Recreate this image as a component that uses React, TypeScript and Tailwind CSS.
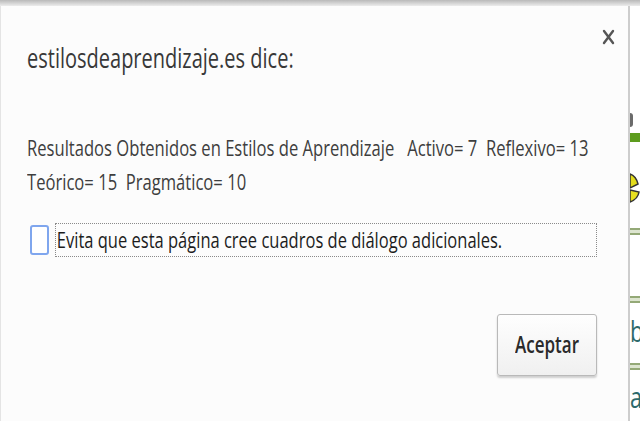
const font = { fontFamily: '"Open Sans", "Noto Sans", sans-serif' };

const Stretch = ({ children }: { children: React.ReactNode }) => (
  <span className="inline-block scale-y-[1.35] whitespace-pre">{children}</span>
);

const App = () => {
  return (
    <div className="w-[640px] h-[421px] overflow-hidden bg-white" style={font}>
      <div className="h-[6px] bg-linear-to-b from-[#b9b9b9] to-[#ececec]" />
      <div className="flex h-[415px]">
        {/* dialog */}
        <div className="w-[630px] flex flex-col bg-[#fcfcfc] border-l border-[#e4e4e4] border-r-2 border-r-[#cdcdcd] pl-[26px] pr-[31px]">
          <div className="flex items-start justify-between">
            <div className="mt-[39px] text-[20px] leading-[28px] text-[#383838]">
              <Stretch>estilosdeaprendizaje.es dice:</Stretch>
            </div>
            <button className="mt-[23px] mr-[-18px] text-[#555]">
              <svg width="13" height="16" viewBox="0 0 13 16">
                <path d="M2 2 L11 14 M11 2 L2 14" stroke="currentColor" strokeWidth="2.4" strokeLinecap="round" />
              </svg>
            </button>
          </div>

          <div className="mt-[58px] text-[16.6px] leading-[34px] text-[#3e3e3e]">
            <div>
              <Stretch>Resultados Obtenidos en Estilos de Aprendizaje   Activo= 7  Reflexivo= 13</Stretch>
            </div>
            <div>
              <Stretch>Teórico= 15  Pragmático= 10</Stretch>
            </div>
          </div>

          <div className="mt-[24px] flex items-center h-[34px]">
            <div className="ml-[3px] w-[19px] h-[30px] rounded-[3px] border-2 border-[#7fa6ee] bg-white" />
            <div className="ml-[6px] w-[547px] h-[34px] border border-dotted border-[#8a8a8a] pl-[1px] text-[16.5px] leading-[32px] text-[#1c1c1c]">
              <Stretch>Evita que esta página cree cuadros de diálogo adicionales.</Stretch>
            </div>
          </div>

          <div className="mt-[57px] flex justify-end">
            <button className="w-[100px] h-[62px] rounded-[3px] border border-[#b9b9b9] bg-linear-to-b from-[#fefefe] to-[#f0f0f0] shadow-[0_2px_2px_rgba(0,0,0,0.18)] text-[17px] font-semibold leading-[30px] text-[#2a2a2a]">
              <Stretch>Aceptar</Stretch>
            </button>
          </div>
        </div>

        {/* page behind the dialog */}
        <div className="flex-1 flex flex-col overflow-hidden">
          <div className="mt-[107px] w-[3px] h-[14px] rounded-r-full bg-[#6b6b6b]" />
          <div className="mt-[6px] h-[9px] bg-[#5d9c1e]" />
          <svg className="mt-[30px]" width="10" height="31" viewBox="0 0 10 31">
            <path d="M0 2 Q6 4 8 12 L0 16 Z" fill="#e3dc1c" stroke="#333" strokeWidth="1.5" />
            <path d="M0 18 L9 20 Q8 27 0 30 Z" fill="#e8e020" stroke="#333" strokeWidth="1.5" />
          </svg>
          <div className="mt-[25px] h-[7px] border-y-2 border-[#94a977] bg-[#dde5d0]" />
          <div className="mt-[61px] h-[7px] border-y-2 border-[#94a977] bg-[#dde5d0]" />
          <div className="mt-[12px] h-[30px] text-[22px] leading-[30px] text-[#2d6a6c]">
            <Stretch>b</Stretch>
          </div>
          <div className="mt-[18px] h-[7px] border-y-2 border-[#94a977] bg-[#dde5d0]" />
          <div className="mt-[11px] h-[30px] text-[22px] leading-[30px] text-[#2d6a6c]">
            <Stretch>a</Stretch>
          </div>
        </div>
      </div>
    </div>
  );
};

export default App;
